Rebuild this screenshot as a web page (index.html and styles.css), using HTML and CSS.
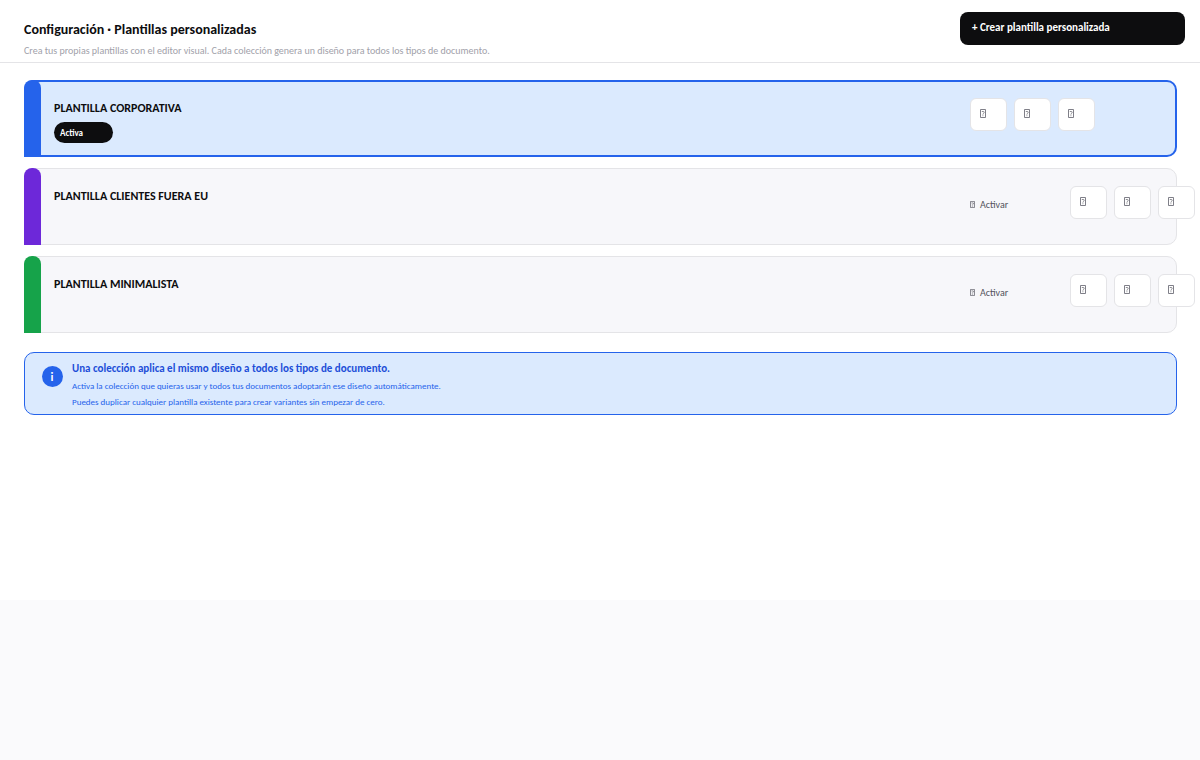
FILE: index.html
```html
<!DOCTYPE html>
<html lang="es">
<head>
<meta charset="utf-8">
<meta name="viewport" content="width=device-width, initial-scale=1">
<title>Configuración · Plantillas personalizadas</title>
<link rel="stylesheet" href="styles.css">
</head>
<body>
<svg class="defs" aria-hidden="true">
  <symbol id="glyph" viewBox="0 0 6 9">
    <path d="M.5.5h5v8h-5z" fill="none" stroke="currentColor" stroke-width=".9"/>
    <path d="M1.800 2.500h1.700q.7 0 .7.800t-.7 1.100t-.6 1.200M2.900 6.300v.9" fill="none" stroke="currentColor" stroke-width=".8"/>
  </symbol>
</svg>
<div class="page">
  <header class="header">
    <div class="heading">
      <h1 class="title">Configuración · Plantillas personalizadas</h1>
      <p class="subtitle">Crea tus propias plantillas con el editor visual. Cada colección genera un diseño para todos los tipos de documento.</p>
    </div>
    <button class="create" type="button">+ Crear plantilla personalizada</button>
  </header>
  <main class="content">
    <section class="cards">
      <article class="card card-active">
        <div class="stripe stripe-blue"></div>
        <div class="info">
          <h2 class="name">PLANTILLA CORPORATIVA</h2>
          <span class="badge">Activa</span>
        </div>
        <div class="actions">
          <button class="tool" type="button" aria-label="Editar"><svg class="glyph"><use href="#glyph"/></svg></button>
          <button class="tool" type="button" aria-label="Duplicar"><svg class="glyph"><use href="#glyph"/></svg></button>
          <button class="tool" type="button" aria-label="Eliminar"><svg class="glyph"><use href="#glyph"/></svg></button>
        </div>
      </article>
      <article class="card">
        <div class="stripe stripe-purple"></div>
        <div class="info">
          <h2 class="name">PLANTILLA CLIENTES FUERA EU</h2>
        </div>
        <div class="actions">
          <button class="activate" type="button"><svg class="glyph-small"><use href="#glyph"/></svg>Activar</button>
          <button class="tool" type="button" aria-label="Editar"><svg class="glyph"><use href="#glyph"/></svg></button>
          <button class="tool" type="button" aria-label="Duplicar"><svg class="glyph"><use href="#glyph"/></svg></button>
          <button class="tool" type="button" aria-label="Eliminar"><svg class="glyph"><use href="#glyph"/></svg></button>
        </div>
      </article>
      <article class="card">
        <div class="stripe stripe-green"></div>
        <div class="info">
          <h2 class="name">PLANTILLA MINIMALISTA</h2>
        </div>
        <div class="actions">
          <button class="activate" type="button"><svg class="glyph-small"><use href="#glyph"/></svg>Activar</button>
          <button class="tool" type="button" aria-label="Editar"><svg class="glyph"><use href="#glyph"/></svg></button>
          <button class="tool" type="button" aria-label="Duplicar"><svg class="glyph"><use href="#glyph"/></svg></button>
          <button class="tool" type="button" aria-label="Eliminar"><svg class="glyph"><use href="#glyph"/></svg></button>
        </div>
      </article>
    </section>
    <aside class="notice">
      <span class="notice-icon">i</span>
      <div>
        <h3 class="notice-title">Una colección aplica el mismo diseño a todos los tipos de documento.</h3>
        <p class="notice-text">Activa la colección que quieras usar y todos tus documentos adoptarán ese diseño automáticamente.</p>
        <p class="notice-text">Puedes duplicar cualquier plantilla existente para crear variantes sin empezar de cero.</p>
      </div>
    </aside>
  </main>
</div>
</body>
</html>
```
FILE: styles.css
```css
* { box-sizing: border-box; }
body {
  margin: 0;
  background: #fafafc;
  color: #0d0d0f;
  font-family: Carlito, Calibri, Lato, sans-serif;
}
h1, h2, h3, p { margin: 0; }
button { font-family: inherit; border: 0; padding: 0; text-align: left; cursor: pointer; }
.defs { display: none; }
.page { min-height: 600px; background: #fff; }
.header {
  display: flex;
  justify-content: space-between;
  align-items: flex-start;
  padding: 12px 15px 0 24px;
  min-height: 63px;
  border-bottom: 1px solid #e4e4e7;
}
.heading { padding-top: 8px; }
.title { font-size: 14px; line-height: 20px; }
.subtitle { margin-top: 4px; font-size: 10px; line-height: 14px; color: #a1a1aa; }
.create {
  flex: none;
  width: 225px;
  height: 33px;
  padding: 0 12px 2px;
  border-radius: 8px;
  background: #0d0d0f;
  color: #fff;
  font-size: 11px;
  font-weight: 700;
}
.content { padding: 17px 23px 0 24px; }
.cards { display: flex; flex-direction: column; gap: 11px; }
.card {
  position: relative;
  display: flex;
  min-height: 77px;
  padding: 17px 0 0 29px;
  border: 1px solid #e4e4e7;
  border-radius: 10px;
  background: #f7f7fa;
}
.card-active { padding: 16px 0 0 28px; border: 2px solid #2563eb; background: #dbeafe; }
.stripe {
  position: absolute;
  top: -1px;
  bottom: -1px;
  left: -1px;
  width: 17px;
  border-radius: 8px 8px 0 0;
}
.card-active .stripe { top: -2px; bottom: -2px; left: -2px; }
.stripe-blue { background: #2563eb; }
.stripe-purple { background: #6d28d9; }
.stripe-green { background: #16a34a; }
.info { flex: 1; }
.name { font-size: 12px; line-height: 20px; }
.badge {
  display: block;
  width: 59px;
  margin-top: 4px;
  padding-left: 6px;
  border-radius: 11px;
  background: #0d0d0f;
  color: #fff;
  font-size: 9px;
  font-weight: 700;
  line-height: 21px;
}
.actions { display: flex; flex: none; gap: 7px; width: 206px; }
.card-active .actions { width: 205px; }
.tool {
  flex: none;
  display: flex;
  align-items: flex-start;
  width: 37px;
  height: 33px;
  padding: 10px 9px;
  border: 1px solid #e4e4e7;
  border-radius: 6px;
  background: #fff;
  color: #71717a;
}
.glyph { width: 6px; height: 9px; }
.glyph-small { width: 5px; height: 7px; }
.activate {
  flex: none;
  display: flex;
  align-items: center;
  gap: 5px;
  width: 93px;
  height: 37px;
  background: transparent;
  color: #52525b;
  font-size: 10px;
}
.notice {
  display: flex;
  gap: 9px;
  margin-top: 19px;
  padding: 7px 17px 4px;
  border: 1px solid #2563eb;
  border-radius: 10px;
  background: #dbeafe;
  color: #1d4ed8;
}
.notice-icon {
  flex: none;
  width: 21px;
  height: 21px;
  margin-top: 6px;
  padding-right: 1px;
  border-radius: 50%;
  background: #2563eb;
  color: #fff;
  font-size: 12px;
  font-weight: 700;
  line-height: 23px;
  text-align: center;
}
.notice-title { font-size: 11px; line-height: 18px; }
.notice-text { font-size: 9px; line-height: 16px; color: #2563eb; }
```
